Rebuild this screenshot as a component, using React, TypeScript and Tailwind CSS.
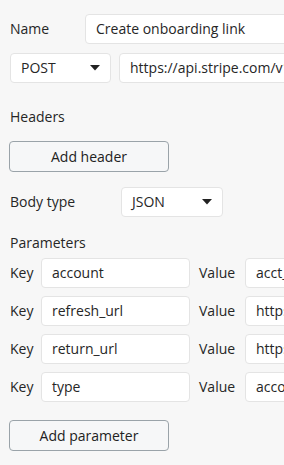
import React from 'react';

function Caret() {
  return (
    <svg width="10" height="6" viewBox="0 0 10 6" className="shrink-0">
      <path d="M0 0 L10 0 L5 5.5 Z" fill="#222" />
    </svg>
  );
}

function Field({ value, className }: { value: string; className: string }) {
  return (
    <div
      className={`h-[30px] shrink-0 flex items-center px-[10px] bg-white border border-[#e4e4e4] rounded-[4px] overflow-hidden whitespace-nowrap ${className}`}
    >
      {value}
    </div>
  );
}

function Select({ value, className }: { value: string; className: string }) {
  return (
    <div
      className={`h-[30px] shrink-0 flex items-center justify-between pl-[10px] pr-[10px] bg-white border border-[#e4e4e4] rounded-[4px] ${className}`}
    >
      <span>{value}</span>
      <Caret />
    </div>
  );
}

function Button({ label }: { label: string }) {
  return (
    <button className="w-[160px] h-[31px] ml-[-1px] flex items-center justify-center rounded-[4px] border border-[#9aa3a9] bg-[#f6f7f8] text-[#222]">
      {label}
    </button>
  );
}

export default function App() {
  const params = [
    { key: 'account', value: 'acct_1OxR8bQ2vN' },
    { key: 'refresh_url', value: 'https://example.com/reauth' },
    { key: 'return_url', value: 'https://example.com/return' },
    { key: 'type', value: 'account_onboarding' },
  ];

  return (
    <div
      className="w-[284px] h-[465px] overflow-hidden bg-[#f7f7f7] text-[14px] leading-[20px] text-[#262626] pl-[10px] pt-[14px]"
      style={{ fontFamily: '"Open Sans", "Noto Sans", sans-serif' }}
    >
      {/* Name */}
      <div className="flex items-center">
        <span className="w-[75px] shrink-0">Name</span>
        <Field value="Create onboarding link" className="w-[220px] h-[29px]" />
      </div>

      {/* Method + URL */}
      <div className="flex items-center mt-[9px] gap-[8px]">
        <Select value="POST" className="w-[101px] h-[29px]" />
        <Field value="https://api.stripe.com/v1/account_links" className="w-[200px] h-[29px]" />
      </div>

      {/* Headers */}
      <div className="mt-[24px]">Headers</div>
      <div className="mt-[14px]">
        <Button label="Add header" />
      </div>

      {/* Body type */}
      <div className="flex items-center mt-[15px]">
        <span className="w-[111px] shrink-0">Body type</span>
        <Select value="JSON" className="w-[102px]" />
      </div>

      {/* Parameters */}
      <div className="mt-[16px]">Parameters</div>
      <div className="flex flex-col gap-[8px] mt-[5px]">
        {params.map((p) => (
          <div key={p.key} className="flex items-center">
            <span className="w-[31px] shrink-0">Key</span>
            <Field value={p.key} className="w-[149px]" />
            <span className="w-[46px] shrink-0 ml-[9px]">Value</span>
            <Field value={p.value} className="w-[120px]" />
          </div>
        ))}
      </div>

      <div className="mt-[18px]">
        <Button label="Add parameter" />
      </div>
    </div>
  );
}
